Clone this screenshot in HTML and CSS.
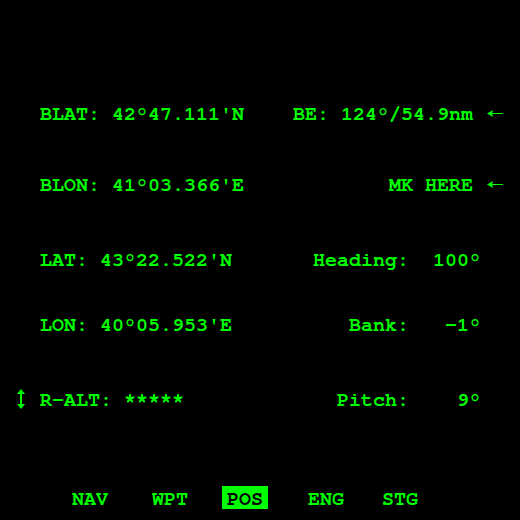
FILE: index.html
```html
<!DOCTYPE html>
<html>
<head>
<meta charset="utf-8">
<link rel="stylesheet" href="styles.css">
</head>
<body>
<div class="screen">
  <div class="rows">
    <div class="row r1"><span class="left">BLAT: 42°47.111'N</span><span class="right arrowed">BE: 124°/54.9nm<svg class="arrow" width="16" height="7" viewBox="0 0 16 7"><rect x="4" y="3" width="12" height="1" fill="#00ff00"/><polygon points="0,3.5 6,0 5,3.5 6,7" fill="#00ff00"/></svg></span></div>
    <div class="row r2"><span class="left">BLON: 41°03.366'E</span><span class="right arrowed">MK HERE<svg class="arrow" width="16" height="7" viewBox="0 0 16 7"><rect x="4" y="3" width="12" height="1" fill="#00ff00"/><polygon points="0,3.5 6,0 5,3.5 6,7" fill="#00ff00"/></svg></span></div>
    <div class="row r3"><span class="left">LAT: 43°22.522'N</span><span class="right">Heading:  100°</span></div>
    <div class="row r4"><span class="left">LON: 40°05.953'E</span><span class="right">Bank:   -1°</span></div>
    <div class="row r5"><span class="left"><svg class="ind" width="8" height="20" viewBox="0 0 8 20"><rect x="3" y="3" width="2" height="14" fill="#00ff00"/><polygon points="4,0 8,5 0,5" fill="#00ff00"/><polygon points="4,20 8,15 0,15" fill="#00ff00"/></svg>R-ALT: *****</span><span class="right">Pitch:    9°</span></div>
  </div>
  <nav class="tabs">
    <span class="tab t-nav">NAV</span>
    <span class="tab t-wpt">WPT</span>
    <span class="tab t-pos active">POS</span>
    <span class="tab t-eng">ENG</span>
    <span class="tab t-stg">STG</span>
  </nav>
</div>
</body>
</html>
```
FILE: styles.css
```css
html, body {
  margin: 0;
  padding: 0;
  background: #000;
}
body {
  width: 520px;
  height: 520px;
  overflow: hidden;
  font-family: FreeMono, "Liberation Mono", monospace;
  font-weight: bold;
  font-size: 20px;
  color: #00ff00;
}
.screen {
  display: flex;
  flex-direction: column;
  height: 520px;
  padding-top: 102px;
  box-sizing: border-box;
}
.rows {
  display: flex;
  flex-direction: column;
  padding: 0 17px 0 40px;
}
.row {
  display: flex;
  justify-content: space-between;
  height: 24px;
  line-height: 24px;
  white-space: pre;
}
.r2 { margin-top: 47px; }
.r3 { margin-top: 51px; }
.r4 { margin-top: 41px; }
.r5 { margin-top: 51px; }
.right { margin-right: 22px; }
.right.arrowed { margin-right: 0; }
.arrow {
  margin-left: 14px;
  vertical-align: 3px;
}
.left { position: relative; }
.ind {
  position: absolute;
  left: -23px;
  top: 1px;
}
.tabs {
  display: flex;
  padding-left: 67px;
  margin-top: 74px;
}
.tab {
  padding: 4px 5px 0;
  height: 23px;
  box-sizing: border-box;
  line-height: 19px;
  white-space: pre;
}
.t-wpt { margin-left: 34px; }
.t-pos { margin-left: 29px; }
.t-eng { margin-left: 35px; }
.t-stg { margin-left: 28px; }
.tab.active {
  background: #00ff00;
  color: #000;
}
```
